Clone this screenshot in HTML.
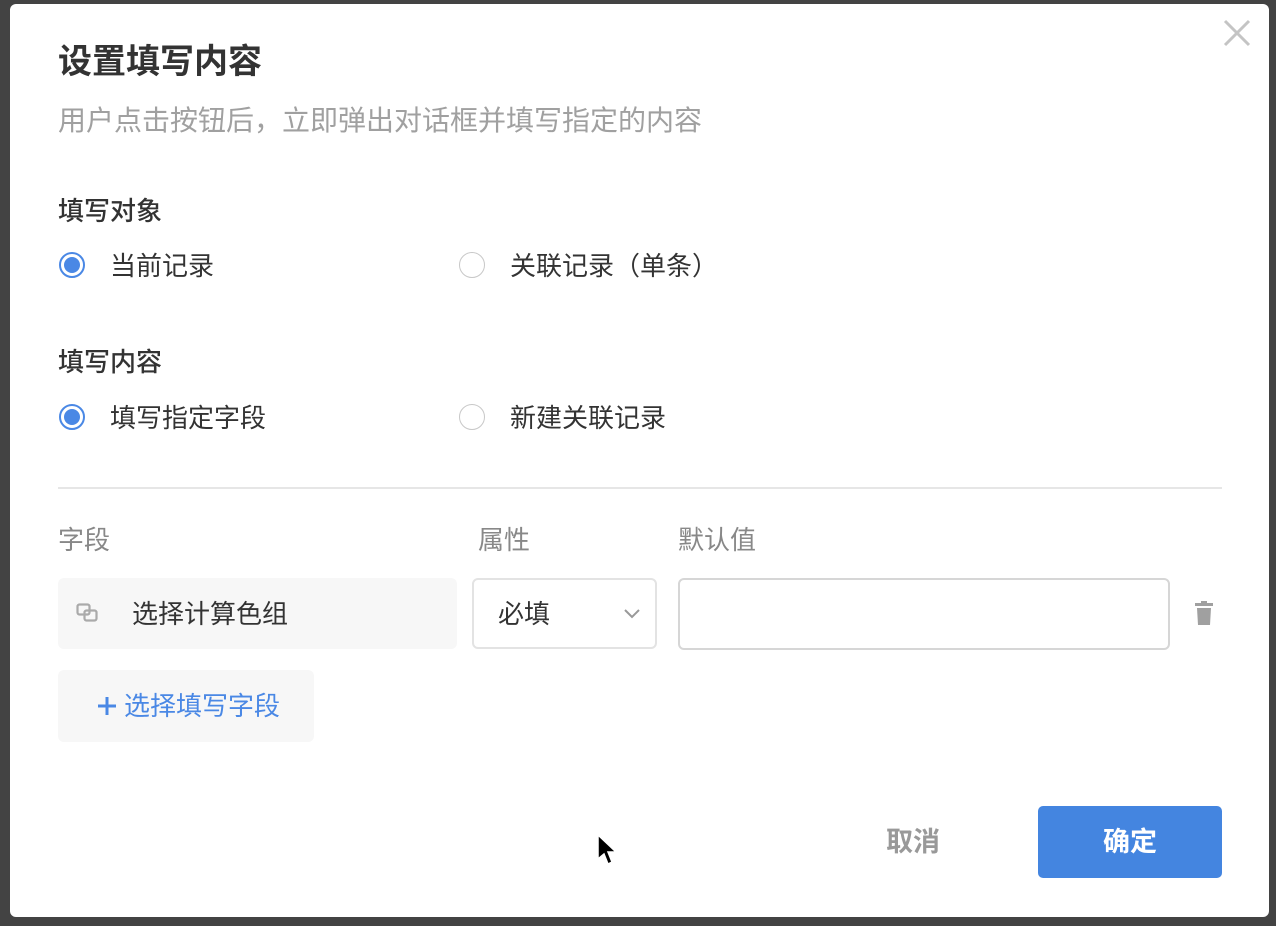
<!DOCTYPE html>
<html><head><meta charset="utf-8"><style>
body{margin:0;width:1276px;height:926px;background:#434343;position:relative;overflow:hidden;font-family:"Liberation Sans","Noto Sans CJK SC",sans-serif;}
.d{position:absolute;left:10px;top:4px;width:1259px;height:913px;background:#fff;border-radius:6px;}
.a{position:absolute;white-space:nowrap;line-height:1;}
.r{position:absolute;width:26px;height:26px;border-radius:50%;box-sizing:border-box;}
.on{border:2px solid #4a88e5;}
.on::after{content:"";position:absolute;left:3px;top:3px;width:16px;height:16px;border-radius:50%;background:#4a88e5;}
.off{border:1.5px solid #c8c8c8;}
</style></head><body>
<div class="d">
<svg class="a" style="left:1213px;top:15px" width="28" height="28"><path d="M2 2L26 26M26 2L2 26" stroke="#c4c4c4" stroke-width="3"/></svg>
<div class="a" style="left:48px;top:41px;font-size:34px;font-weight:bold;color:#333;">设置填写内容</div>
<div class="a" style="left:48px;top:103px;font-size:28px;color:#a0a0a0;">用户点击按钮后，立即弹出对话框并填写指定的内容</div>
<div class="a" style="left:48px;top:194px;font-size:26px;font-weight:500;color:#333;">填写对象</div>
<div class="r on" style="left:49px;top:248px"></div>
<div class="a" style="left:100px;top:249px;font-size:26px;color:#333;">当前记录</div>
<div class="r off" style="left:449px;top:248px"></div>
<div class="a" style="left:500px;top:249px;font-size:26px;color:#333;">关联记录（单条）</div>
<div class="a" style="left:48px;top:345px;font-size:26px;font-weight:500;color:#333;">填写内容</div>
<div class="r on" style="left:49px;top:400px"></div>
<div class="a" style="left:100px;top:401px;font-size:26px;color:#333;">填写指定字段</div>
<div class="r off" style="left:449px;top:400px"></div>
<div class="a" style="left:500px;top:401px;font-size:26px;color:#333;">新建关联记录</div>
<div class="a" style="left:48px;top:483px;width:1164px;height:2px;background:#e6e6e6"></div>
<div class="a" style="left:48px;top:523px;font-size:26px;color:#888;">字段</div>
<div class="a" style="left:468px;top:523px;font-size:26px;color:#888;">属性</div>
<div class="a" style="left:668px;top:523px;font-size:26px;color:#888;">默认值</div>
<div class="a" style="left:48px;top:574px;width:399px;height:71px;background:#f7f7f7;border-radius:6px"></div>
<svg class="a" style="left:66px;top:599px" width="24" height="20"><rect x="1.5" y="1.5" width="12" height="10" rx="2" fill="none" stroke="#aaa" stroke-width="2.2"/><rect x="8.5" y="7.5" width="12" height="10" rx="2" fill="none" stroke="#aaa" stroke-width="2.2"/></svg>
<div class="a" style="left:122px;top:597px;font-size:26px;color:#333;">选择计算色组</div>
<div class="a" style="left:462px;top:574px;width:185px;height:71px;border:2px solid #e3e3e3;border-radius:6px;box-sizing:border-box"></div>
<div class="a" style="left:488px;top:597px;font-size:26px;color:#333;">必填</div>
<svg class="a" style="left:613px;top:604px" width="18" height="12"><path d="M2 2L9 9L16 2" fill="none" stroke="#999" stroke-width="2"/></svg>
<div class="a" style="left:668px;top:574px;width:492px;height:72px;border:2px solid #d6d6d6;border-radius:6px;box-sizing:border-box"></div>
<svg class="a" style="left:1184px;top:597px" width="22" height="26"><rect x="1" y="2" width="18" height="3" fill="#a0a0a0"/><rect x="7" y="0" width="6" height="3" fill="#a0a0a0"/><path d="M3 7H17L16 24H4Z" fill="#a0a0a0"/></svg>
<div class="a" style="left:48px;top:666px;width:256px;height:72px;background:#f7f7f7;border-radius:6px"></div>
<svg class="a" style="left:87px;top:692px" width="20" height="20"><path d="M10 1V19M1 10H19" stroke="#4a88e5" stroke-width="3"/></svg>
<div class="a" style="left:114px;top:689px;font-size:26px;color:#4a88e5;">选择填写字段</div>
<div class="a" style="left:876px;top:825px;font-size:27px;font-weight:bold;color:#999;">取消</div>
<div class="a" style="left:1028px;top:802px;width:184px;height:72px;background:#4485e0;border-radius:5px;color:#fff;font-size:27px;font-weight:bold;text-align:center;line-height:72px">确定</div>
<svg class="a" style="left:585px;top:829px" width="26" height="36"><path d="M3 2V26L9 21L13 31L17 29L13 19H21Z" fill="#000" stroke="#fff" stroke-width="1.5"/></svg>
</div>
</body></html>
